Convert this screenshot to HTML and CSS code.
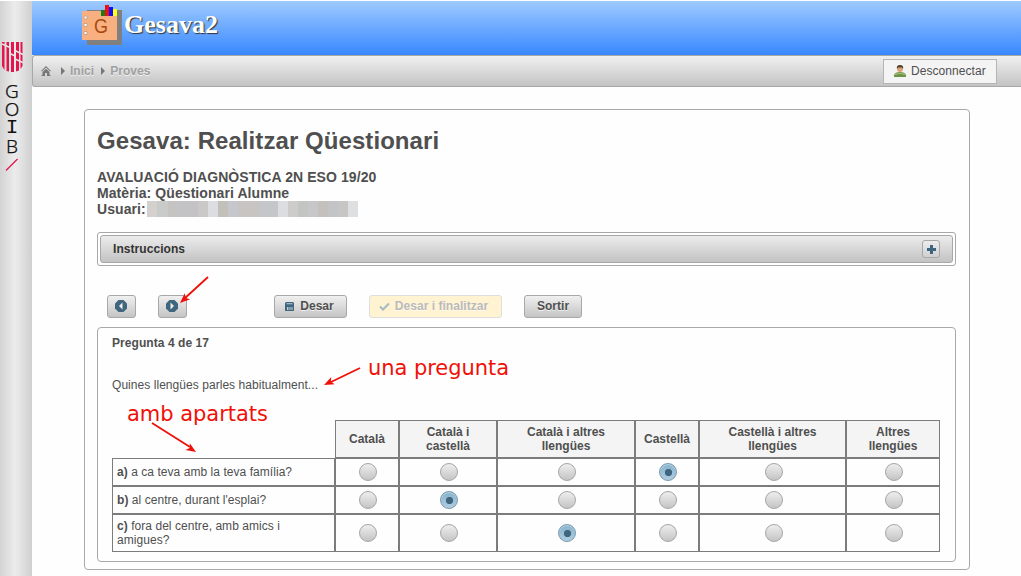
FILE: index.html
```html
<!DOCTYPE html>
<html lang="ca">
<head>
<meta charset="utf-8">
<title>Gesava2</title>
<link rel="stylesheet" href="styles.css">
</head>
<body>
<div class="app">
  <aside class="sidebar">
    <svg class="shield" width="21" height="31" viewBox="0 0 21 31">
      <path d="M0 0H2.500V28L0 24ZM4.500 0H7V29.500L4.500 29ZM9 0H12V30H9ZM14 0H17V28.500L14 29.500ZM18.500 0H20.500V24L18.500 27Z" fill="#e5154b"/>
      <path d="M0 2L8 5.500V11.500L13 14V17L21 20.500M12 8L21 12.500" fill="none" stroke="#e9e9e9" stroke-width="1.500"/>
    </svg>
    <div class="goib"><span>G</span><span>O</span><span class="serif-i">I</span><span>B</span></div>
    <svg class="slash" width="14" height="14" viewBox="0 0 14 14"><path d="M1 12.500L12.500 1" stroke="#e5154b" stroke-width="1.300"/></svg>
  </aside>
  <div class="main">
    <header class="header">
      <svg class="logo" width="41" height="41" viewBox="0 0 41 41">
        <path d="M5 5H40V40H5Z" fill="#808080"/>
        <path d="M0 6H35V35H0Z" fill="#f8b080"/>
        <path d="M2 11.500h3v3h-3zM2 19h3v3h-3zM2 27h3v3h-3z" fill="#fff" stroke="#c9a48c" transform="translate(0 -.500)"/>
        <path d="M19 5h4v6h-4z" fill="#188010"/><path d="M23 0h4v11h-4z" fill="#f01010"/>
        <path d="M27 2h4v9h-4z" fill="#1010ff"/><path d="M31 4h4v7h-4z" fill="#ffff10"/>
        <text class="logo-letter" x="12" y="27.500" textLength="14" lengthAdjust="spacingAndGlyphs">G</text>
      </svg>
      <span class="brand">Gesava2</span>
    </header>
    <nav class="menubar">
      <svg class="home" width="10" height="10" viewBox="0 0 10 10"><path d="M0 5L5 0L10 5L9 5.500L5 1.500L1 5.500ZM1.500 6L5 2.700L8.500 6V9H9.500V10H6V7H4V10H.500V9H1.500Z" fill="#777"/></svg>
      <i class="tri"></i><span>Inici</span>
      <i class="tri second"></i><span>Proves</span>
      <button class="logout">
        <svg width="12" height="12" viewBox="0 0 12 12"><path d="M0 12V10Q1 7 6 7Q11 7 12 10V12Z" fill="#719348"/><path d="M1 9.500Q6 7 11 9.500" stroke="#a7c77b" fill="none"/><circle cx="6" cy="4" r="3" fill="#dda575"/><path d="M3 4Q2 0 6 0Q10 0 9 4L8 2.500H4Z" fill="#57412f"/></svg>
        <span>Desconnectar</span>
      </button>
    </nav>
    <main class="panel">
      <h1>Gesava: Realitzar Qüestionari</h1>
      <div class="info">
        <div>AVALUACIÓ DIAGNÒSTICA 2N ESO 19/20</div>
        <div>Matèria: Qüestionari Alumne</div>
        <div class="user"><span class="user-label">Usuari:</span><span class="redacted"></span></div>
      </div>
      <section class="accordion">
        <div class="accordion-head"><span>Instruccions</span>
          <span class="toggle"><svg width="10" height="10" viewBox="0 0 10 10"><path d="M4 1h3v3h3v3H7v3H4V7H1V4h3z" fill="#3f667e"/></svg></span>
        </div>
      </section>
      <div class="toolbar">
        <button class="btn nav"><svg width="12" height="12" viewBox="0 0 12 12"><path d="M3.500 0h5L12 3.500v5L8.500 12h-5L0 8.500v-5z" fill="#3f667e"/><path d="M7.500 2.500v7L4 6z" fill="#eee"/></svg></button>
        <button class="btn nav next"><svg width="12" height="12" viewBox="0 0 12 12"><path d="M3.500 0h5L12 3.500v5L8.500 12h-5L0 8.500v-5z" fill="#3f667e"/><path d="M4.500 2.500v7L8 6z" fill="#eee"/></svg></button>
        <button class="btn save"><svg width="9" height="9" viewBox="0 0 9 9"><path d="M1 0h7l1 1v7.500L8.500 9H.500L0 8.500V1z" fill="#3f667e"/><path d="M1.500 1.200h6v1h-6zM2 5h1.500v3H2zM4.500 5h1v3h-1zM6.500 5h1v3h-1z" fill="#c5ced3"/></svg><span>Desar</span></button>
        <button class="btn finish"><svg width="11" height="9" viewBox="0 0 11 9"><path d="M1 4.500L4 7.500L10 1.500" fill="none" stroke="#aabdc6" stroke-width="2.200"/></svg><span>Desar i finalitzar</span></button>
        <button class="btn exit"><span>Sortir</span></button>
      </div>
      <section class="question">
        <h2>Pregunta 4 de 17</h2>
        <p>Quines llengües parles habitualment...</p>
        <table>
          <colgroup><col class="c0"><col class="c1"><col class="c2"><col class="c3"><col class="c4"><col class="c5"><col class="c6"></colgroup>
          <tr class="head"><td class="blank"></td><th>Català</th><th>Català i<br>castellà</th><th>Català i altres<br>llengües</th><th>Castellà</th><th>Castellà i altres<br>llengües</th><th>Altres<br>llengües</th></tr>
          <tr class="short"><td><b>a)</b> a ca teva amb la teva família?</td><td><i class="radio"></i></td><td><i class="radio"></i></td><td><i class="radio"></i></td><td><i class="radio on"></i></td><td><i class="radio"></i></td><td><i class="radio"></i></td></tr>
          <tr class="short"><td><b>b)</b> al centre, durant l'esplai?</td><td><i class="radio"></i></td><td><i class="radio on"></i></td><td><i class="radio"></i></td><td><i class="radio"></i></td><td><i class="radio"></i></td><td><i class="radio"></i></td></tr>
          <tr class="tall"><td><b>c)</b> fora del centre, amb amics i<br>amigues?</td><td><i class="radio"></i></td><td><i class="radio"></i></td><td><i class="radio on"></i></td><td><i class="radio"></i></td><td><i class="radio"></i></td><td><i class="radio"></i></td></tr>
        </table>
      </section>
    </main>
  </div>
  <svg class="notes" width="1021" height="576" viewBox="0 0 1021 576">
    <g stroke="#f01008" stroke-width="1.800" fill="none"><path d="M208 277L184 299M360 368L330 382.500M152 423L190 447"/></g>
    <g fill="#f01008">
      <path d="M0 0L10-4L7.500 0L10 4Z" transform="translate(180 303) rotate(-42)"/>
      <path d="M0 0L10-4L7.500 0L10 4Z" transform="translate(324 385) rotate(-25.500)"/>
      <path d="M0 0L10-4L7.500 0L10 4Z" transform="translate(196 452) rotate(213)"/>
      <text x="368" y="375" textLength="141">una pregunta</text>
      <text x="127" y="421" textLength="141">amb apartats</text>
    </g>
  </svg>
</div>
</body>
</html>
```
FILE: styles.css
```css
* { box-sizing: border-box; }
body { margin: 0; background: #fefefe; color: #4f4f4f; font: 12px/14px "Liberation Sans", Arial, sans-serif; }
.app { position: relative; display: flex; width: 1021px; height: 576px; overflow: hidden; }
.sidebar { width: 32px; margin-top: 1px; padding: 41px 0 0 2px; background: linear-gradient(90deg, #d3d3d3, #ebebeb 45%, #e6e6e6 60%, #cfcfcf); flex: none; }
.shield, .slash { display: block; }
.goib { width: 20px; margin-top: 9px; font: 300 19px/18.300px "Noto Sans", sans-serif; color: #111; -webkit-text-stroke: .25px #111; display: flex; flex-direction: column; align-items: center; }
.goib .serif-i { font: 21px/18.300px "Liberation Mono", monospace; -webkit-text-stroke: 0; }
.slash { margin: 3px 0 0 3px; }
.main { flex: 1; min-width: 0; padding-top: 1px; }
.header { height: 54px; padding: 4px 0 0 50px; display: flex; background: linear-gradient(#9fcaff, #3888ff); }
.logo { flex: none; }
.logo-letter { font: 20px "Liberation Sans", sans-serif; fill: #a84a10; }
.brand { margin-left: 1px; padding-top: 5px; font: bold 26px/30px "Liberation Serif", serif; color: #fff; text-shadow: 1px 1px 1px #333; }
.menubar { height: 32px; display: flex; align-items: center; padding-left: 8px; border: 1px solid #a8a8a8; border-right: 0; border-radius: 3px 0 0 3px; background: linear-gradient(#f0f0f0, #c3c3c3); color: #a0a0a0; font-weight: bold; letter-spacing: .04px; text-shadow: 0 1px 0 rgba(255,255,255,.7); }
.tri { border-left: 4px solid #777; border-top: 4px solid transparent; border-bottom: 4px solid transparent; margin: 0 5px 0 10px; }
.tri.second { margin-left: 7px; }
.logout { margin-left: auto; margin-right: 24px; width: 114px; height: 25px; display: flex; align-items: center; gap: 5px; padding: 0 0 0 10px; border: 1px solid #b5b5b5; background: #f4f4f4; color: #4f4f4f; font: 12px "Liberation Sans", sans-serif; letter-spacing: .06px; }
.panel { width: 886px; height: 461px; margin: 22px 0 0 52px; padding: 17px 13px 0 12px; border: 1px solid #a8a8a8; border-radius: 4px; }
h1 { margin: 0; font-size: 24px; line-height: 28px; letter-spacing: .07px; }
.info { margin-top: 14px; font-weight: bold; font-size: 14px; line-height: 16px; letter-spacing: .08px; }
.user { display: flex; }
.user-label { width: 48px; }
.redacted { width: 211px; height: 16px; margin-left: 2px; background: linear-gradient(90deg, #d4d0cd 0 10px, #c9cbca 10px 21px, #c5c4c3 21px 31px, #c3c3c5 31px 51px, #cac9c8 51px 61px, #dcdde0 61px 71px, #c3bfb9 71px 81px, #c6c7cc 81px 91px, #c7c4c2 91px 111px, #c5c6ca 111px 131px, #dcdde0 131px 141px, #cdccca 141px 151px, #c3c5c4 151px 161px, #c7c7c9 161px 171px, #c4c1bd 171px 181px, #c3c4c6 181px 191px, #c8c6c5 191px 201px, #dddfe0 201px); }
.accordion { height: 34px; margin-top: 15px; padding: 2px; border: 1px solid #a8a8a8; border-radius: 3px; }
.accordion-head { height: 28px; display: flex; align-items: center; justify-content: space-between; padding: 0 12px; border: 1px solid #a8a8a8; border-radius: 3px; background: linear-gradient(#ececec, #c3c3c3); color: #333; font-weight: bold; letter-spacing: .06px; }
.toggle { width: 18px; height: 18px; display: grid; place-items: center; border: 1px solid #a8a8a8; border-radius: 3px; background: linear-gradient(#ededed, #d0d0d0); }
.toggle svg { display: block; }
.toolbar { display: flex; margin: 29px 0 0 10px; }
.btn { height: 23px; display: flex; align-items: center; justify-content: center; padding: 0; border: 1px solid #a8a8a8; border-radius: 3px; background: linear-gradient(#f0f0f0, #c4c4c4); color: #4f4f4f; font: bold 12px "Liberation Sans", sans-serif; letter-spacing: .04px; text-shadow: 0 1px 0 rgba(255,255,255,.7); }
.btn span { padding-bottom: 2px; }
.nav { width: 29px; padding: 0 2px 1px 0; }
.next { margin-left: 22px; }
.save { width: 73px; margin-left: 87px; padding-right: 2px; gap: 6px; }
.finish { width: 133px; margin-left: 22px; padding-right: 4px; gap: 5px; border-color: #dedede; background: #fff3d2; color: #bababa; }
.exit { width: 58px; margin-left: 22px; }
.question { height: 235px; margin-top: 9px; padding: 8px 14px 0; border: 1px solid #a8a8a8; border-radius: 4px; }
h2 { margin: 0; font-size: 12px; line-height: 14px; letter-spacing: .06px; }
p { margin: 28px 0; letter-spacing: .05px; }
table { width: 828px; table-layout: fixed; border-spacing: 0; }
td, th { border: 1px solid #7c7c7c; padding: 0 4px; }
td { letter-spacing: .05px; }
td + td { padding: 0 0 0 2px; text-align: center; }
th { background: #f4f4f4; padding: 0; }
.blank { border: 0; }
.head, .tall { height: 38px; }
.short { height: 28px; }
.c0 { width: 223px; } .c1 { width: 64px; } .c2 { width: 98px; } .c3 { width: 138px; } .c4 { width: 64px; } .c5 { width: 147px; } .c6 { width: 94px; }
.radio { display: block; width: 18px; height: 18px; margin: 0 auto; border: 1px solid #a5a5a5; border-radius: 50%; background: linear-gradient(#eee, #c4c4c4); }
.radio.on { border-color: #7798b0; background: radial-gradient(circle at 8.500px 8.500px, #3f667e 3.300px, transparent 4px), linear-gradient(#85b2cb, #b0cde0); box-shadow: inset 0 1px 1px #c0dbea; }
.notes { position: absolute; left: 0; top: 0; pointer-events: none; }
.notes text { font: 21px "DejaVu Sans", sans-serif; }
```
